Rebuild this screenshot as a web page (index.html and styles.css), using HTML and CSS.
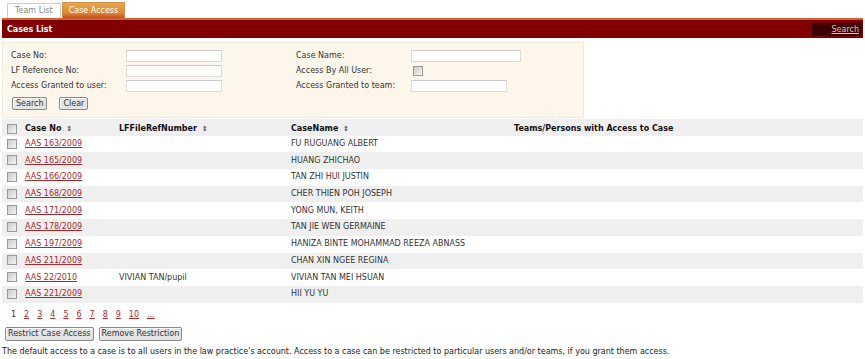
FILE: index.html
```html
<!DOCTYPE html>
<html lang="en">
<head>
  <meta charset="UTF-8"/>
  <title>Case Access</title>
  <link rel="stylesheet" href="styles.css">
</head>
<body>

  <!-- tabs -->
  <div class="tabs">
    <a class="tab" href="#">Team List</a>
    <a class="tab active" href="#">Case Access</a>
  </div>

  <!-- title bar -->
  <div class="bar">
    <span class="bar-title">Cases List</span>
    <a class="bar-search" href="#">Search</a>
  </div>

  <!-- filter panel -->
  <div class="filter">
    <div class="filter-grid">
      <label>Case No:</label><span class="fld"><input type="text" class="w95"></span>
      <label>Case Name:</label><span class="fld"><input type="text" class="w110"></span>
      <label>LF Reference No:</label><span class="fld"><input type="text" class="w95"></span>
      <label>Access By All User:</label><span class="fld"><input type="checkbox" class="cb"></span>
      <label>Access Granted to user:</label><span class="fld"><input type="text" class="w95"></span>
      <label>Access Granted to team:</label><span class="fld"><input type="text" class="w96"></span>
    </div>
    <div class="filter-btns">
      <button class="btn">Search</button>
      <button class="btn">Clear</button>
    </div>
  </div>

  <!-- cases table -->
  <table class="cases">
    <thead>
      <tr>
        <th class="c-cb"><input type="checkbox" class="cb"></th>
        <th class="c-no">Case No <span class="sort">&#8661;</span></th>
        <th class="c-ref">LFFileRefNumber <span class="sort">&#8661;</span></th>
        <th class="c-name">CaseName <span class="sort">&#8661;</span></th>
        <th>Teams/Persons with Access to Case</th>
      </tr>
    </thead>
    <tbody>
      <tr><td class="c-cb"><input type="checkbox" class="cb"></td><td><a href="#">AAS 163/2009</a></td><td></td><td>FU RUGUANG ALBERT</td><td></td></tr>
      <tr><td class="c-cb"><input type="checkbox" class="cb"></td><td><a href="#">AAS 165/2009</a></td><td></td><td>HUANG ZHICHAO</td><td></td></tr>
      <tr><td class="c-cb"><input type="checkbox" class="cb"></td><td><a href="#">AAS 166/2009</a></td><td></td><td>TAN ZHI HUI JUSTIN</td><td></td></tr>
      <tr><td class="c-cb"><input type="checkbox" class="cb"></td><td><a href="#">AAS 168/2009</a></td><td></td><td>CHER THIEN POH JOSEPH</td><td></td></tr>
      <tr><td class="c-cb"><input type="checkbox" class="cb"></td><td><a href="#">AAS 171/2009</a></td><td></td><td>YONG MUN, KEITH</td><td></td></tr>
      <tr><td class="c-cb"><input type="checkbox" class="cb"></td><td><a href="#">AAS 178/2009</a></td><td></td><td>TAN JIE WEN GERMAINE</td><td></td></tr>
      <tr><td class="c-cb"><input type="checkbox" class="cb"></td><td><a href="#">AAS 197/2009</a></td><td></td><td>HANIZA BINTE MOHAMMAD REEZA ABNASS</td><td></td></tr>
      <tr><td class="c-cb"><input type="checkbox" class="cb"></td><td><a href="#">AAS 211/2009</a></td><td></td><td>CHAN XIN NGEE REGINA</td><td></td></tr>
      <tr><td class="c-cb"><input type="checkbox" class="cb"></td><td><a href="#">AAS 22/2010</a></td><td>VIVIAN TAN/pupil</td><td>VIVIAN TAN MEI HSUAN</td><td></td></tr>
      <tr><td class="c-cb"><input type="checkbox" class="cb"></td><td><a href="#">AAS 221/2009</a></td><td></td><td>HII YU YU</td><td></td></tr>
    </tbody>
  </table>

  <!-- paging -->
  <div class="pager">
    <span>1</span>
    <a href="#">2</a><a href="#">3</a><a href="#">4</a><a href="#">5</a><a href="#">6</a>
    <a href="#">7</a><a href="#">8</a><a href="#">9</a><a href="#">10</a><a href="#">...</a>
  </div>

  <div class="actions">
    <button class="btn">Restrict Case Access</button>
    <button class="btn">Remove Restriction</button>
  </div>

  <p class="note">The default access to a case is to all users in the law practice's account. Access to a case can be restricted to particular users and/or teams, if you grant them access.</p>

</body>
</html>
```

FILE: styles.css
```css
/* base */
* { margin:0; padding:0; box-sizing:border-box; }
body {
  font-family: "DejaVu Sans", Verdana, sans-serif;
  font-size: 8px;
  color: #333;
  background: #fff;
  padding: 2px 2px 0 2px;
}
a { color: #a8282c; }

/* tabs */
.tabs { display:flex; padding-left:5px; height:16px; align-items:flex-end; }
.tab {
  display:block;
  height:15px;
  line-height:14px;
  padding:0 7px;
  border:1px solid #ccc;
  border-bottom:none;
  color:#888;
  text-decoration:none;
  background:#fff;
}
.tab.active {
  height:16px;
  line-height:15px;
  margin-left:1px;
  padding:0 6px;
  border-color:#d09050;
  color:#fff;
  background: linear-gradient(#e6a848, #dc8a34 65%, #c4502a);
}

/* red bar */
.bar {
  display:flex;
  justify-content:space-between;
  align-items:center;
  height:20px;
  border-top:2px solid #d2622e;
  background:#800000;
  padding:0 1px 0 5px;
}
.bar-title { color:#fff; font-weight:bold; }
.bar-search {
  background:#3c0000;
  color:#d8c8c8;
  width:50px;
  height:13px;
  line-height:13px;
  text-align:right;
  padding-right:3px;
}

/* filter */
.filter {
  margin-top:4px;
  width:582px;
  height:76px;
  background:#fdf6ea;
  border:1px solid #f4e8d8;
  padding:5px 8px 0 8px;
}
.filter-grid {
  display:grid;
  grid-template-columns:115px 170px 115px auto;
  grid-auto-rows:15px;
  align-items:center;
}
.filter-grid label { white-space:nowrap; }
.fld { display:flex; align-items:center; }
input[type=text] {
  height:12px;
  border:1px solid #ddd;
  border-top-color:#ccc;
  background:#fff;
}
.w95 { width:96px; }
.w110 { width:110px; }
.w96 { width:96px; }
.cb {
  appearance:none;
  width:10px;
  height:10px;
  border:1px solid #999;
  background:linear-gradient(135deg, #ccc, #f4f4f4);
  display:block;
}
.filter-grid .cb { margin-left:2px; }
.filter-btns { display:flex; gap:12px; margin-top:4px; padding-left:1px; }

.btn {
  font-family:inherit;
  font-size:8px;
  color:#333;
  height:13px;
  padding:0 3px;
  background:#e4e4e4;
  border:1px solid #888;
  border-radius:2px;
  box-shadow:inset 1px 1px 0 #fff;
}

/* table */
.cases {
  width:100%;
  border-collapse:collapse;
  margin-top:1px;
}
.cases th, .cases td {
  height:16.7px;
  text-align:left;
  padding:0;
  white-space:nowrap;
  vertical-align:middle;
}
.cases td { padding-bottom:1px; }
.cases th { color:#111; font-weight:bold; padding-top:3px; }
.cases thead tr, .cases tbody tr:nth-child(even) { background:#efefef; }
.c-cb { width:23px; padding-left:5px !important; }
.c-no { width:94px; }
.c-ref { width:172px; }
.c-name { width:223px; }
.sort { font-weight:normal; font-size:7px; margin-left:2px; }

/* pager */
.pager { display:flex; gap:8px; padding:7px 0 0 9px; height:24px; }
.pager span { color:#333; }

.actions { display:flex; gap:5px; padding-left:3px; }
.actions .btn { height:14px; padding:0 2px; }

.note { margin-top:6px; color:#222; }
```
